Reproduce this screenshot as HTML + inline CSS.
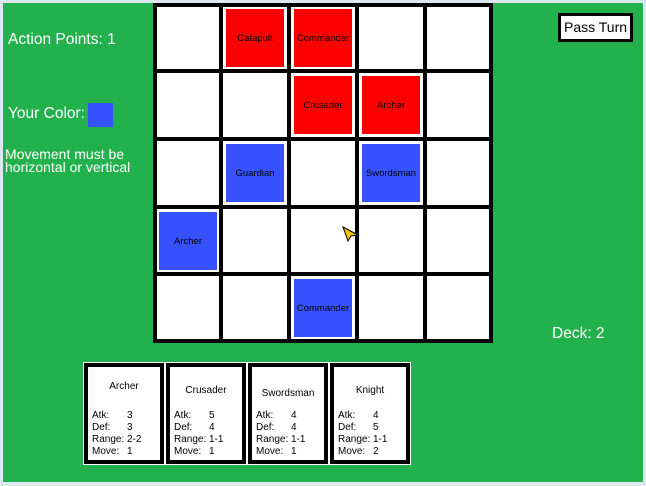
<!DOCTYPE html><html><head><style>
body{margin:0;width:646px;height:486px;background:#dde7ef;position:relative;overflow:hidden;font-family:"Liberation Sans",sans-serif}
.g{position:absolute;left:3px;top:3px;width:640px;height:479px;background:#23b14d}
.a{position:absolute}
.t{color:#fff;font-size:15px;white-space:nowrap}
.c{position:absolute;background:#fff}
.p{position:absolute;width:58px;height:58px;font-size:9.5px;display:flex;align-items:center;justify-content:center;color:#000}
.r{background:#f00}.b{background:#3652ff}
.card{position:absolute;top:363px;width:72px;height:93px;border:4px solid #000;outline:1px solid #fff;background:#fff;font-size:10px;color:#000}
.card .n{position:absolute;width:100%;text-align:center}
.card table{position:absolute;left:4px;top:43px;border-collapse:collapse;font-size:10px}
.card td{padding:0;line-height:12px}
.card td:first-child{width:35px}
</style></head><body>
<div class="g"></div>
<div class="a t" style="left:8px;top:31px;font-size:15.5px">Action Points: 1</div>
<div class="a t" style="left:8px;top:105px;font-size:15.5px">Your Color:</div>
<div class="a" style="left:88px;top:103px;width:25px;height:24px;background:#3652ff"></div>
<div class="a t" style="left:5px;top:148px;font-size:14px;line-height:13px">Movement must be<br>horizontal or vertical</div>
<div class="a t" style="left:552px;top:325px;font-size:15.5px">Deck: 2</div>
<div class="a" style="left:558px;top:13px;width:69px;height:23px;border:3px solid #000;background:#fff;font-size:14px;text-align:center;line-height:23px">Pass Turn</div>
<div class="a" style="left:153px;top:3px;width:340px;height:340px;background:#000"></div>
<div id="bd"></div>
<script>
var xs=[[157,62],[223,64],[291,64],[359,64],[427,62]],ys=[[7,62],[73,64],[141,64],[209,63],[276,63]];
var P={"0,1":["r","Catapult"],"0,2":["r","Commander"],"1,2":["r","Crusader"],"1,3":["r","Archer"],"2,1":["b","Guardian"],"2,3":["b","Swordsman"],"3,0":["b","Archer"],"4,2":["b","Commander"]};
var h="";for(var r=0;r<5;r++)for(var c=0;c<5;c++){var x=xs[c],y=ys[r];h+='<div class="c" style="left:'+x[0]+'px;top:'+y[0]+'px;width:'+x[1]+'px;height:'+y[1]+'px"></div>';var p=P[r+","+c];if(p)h+='<div class="p '+p[0]+'" style="left:'+(x[0]+Math.round((x[1]-58)/2))+'px;top:'+(y[0]+Math.round((y[1]-58)/2))+'px">'+p[1]+'</div>';}
document.getElementById("bd").innerHTML=h;
</script>
<svg class="a" style="left:342px;top:226px" width="18" height="16" viewBox="0 0 18 16"><path d="M1 1 L16 9 L9 10 L6 15 Z" fill="#f5c400" stroke="#000" stroke-width="1"/></svg>
<div class="card" style="left:84px"><div class="n" style="top:14px">Archer</div><table><tr><td>Atk:</td><td>3</td></tr><tr><td>Def:</td><td>3</td></tr><tr><td>Range:</td><td>2-2</td></tr><tr><td>Move:</td><td>1</td></tr></table></div>
<div class="card" style="left:166px"><div class="n" style="top:18px">Crusader</div><table><tr><td>Atk:</td><td>5</td></tr><tr><td>Def:</td><td>4</td></tr><tr><td>Range:</td><td>1-1</td></tr><tr><td>Move:</td><td>1</td></tr></table></div>
<div class="card" style="left:248px"><div class="n" style="top:21px">Swordsman</div><table><tr><td>Atk:</td><td>4</td></tr><tr><td>Def:</td><td>4</td></tr><tr><td>Range:</td><td>1-1</td></tr><tr><td>Move:</td><td>1</td></tr></table></div>
<div class="card" style="left:330px"><div class="n" style="top:18px">Knight</div><table><tr><td>Atk:</td><td>4</td></tr><tr><td>Def:</td><td>5</td></tr><tr><td>Range:</td><td>1-1</td></tr><tr><td>Move:</td><td>2</td></tr></table></div>
</body></html>
